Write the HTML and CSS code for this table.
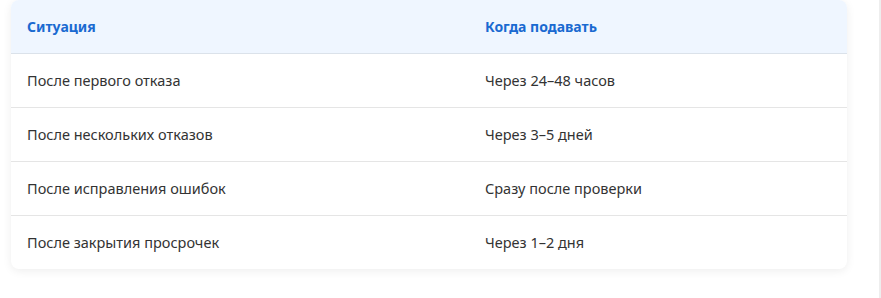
FILE: index.html
```html
<!DOCTYPE html>
<html lang="ru">
<head>
<meta charset="utf-8">
<link rel="stylesheet" href="styles.css">
</head>
<body>
<div class="layout">
  <main class="main">
    <div class="card">
      <table class="table">
        <colgroup><col class="col-a"><col></colgroup>
        <thead>
          <tr><th>Ситуация</th><th>Когда подавать</th></tr>
        </thead>
        <tbody>
          <tr><td>После первого отказа</td><td>Через 24–48 часов</td></tr>
          <tr><td>После нескольких отказов</td><td>Через 3–5 дней</td></tr>
          <tr><td>После исправления ошибок</td><td>Сразу после проверки</td></tr>
          <tr><td>После закрытия просрочек</td><td>Через 1–2 дня</td></tr>
        </tbody>
      </table>
    </div>
  </main>
  <aside class="edge"></aside>
</div>
</body>
</html>
```

FILE: styles.css
```css
html, body {
  margin: 0;
  padding: 0;
  background: #fff;
}
body {
  font-family: "Noto Sans", "Open Sans", sans-serif;
  font-size: 14px;
  color: #333;
}
.layout {
  display: flex;
  height: 298px;
}
.main {
  flex: 1;
  padding: 0 32px 0 11px;
}
.edge {
  width: 2px;
  background: #eeeeee;
}
.card {
  width: 836px;
  border-radius: 8px;
  background: #fff;
  box-shadow: 0 2px 10px rgba(0,0,0,0.07);
  overflow: hidden;
}
.table {
  width: 100%;
  border-collapse: collapse;
  table-layout: fixed;
}
.col-a { width: 458px; }
th, td {
  text-align: left;
  padding: 16px 16px;
  line-height: 21px;
  border-bottom: 1px solid #e5e5e5;
}
td {
  font-size: 14.5px;
}
th {
  background: #eff6ff;
  color: #1a6ad1;
  font-weight: 700;
  border-bottom-color: #dbe2ea;
}
tbody tr:last-child td {
  border-bottom: none;
}
```
